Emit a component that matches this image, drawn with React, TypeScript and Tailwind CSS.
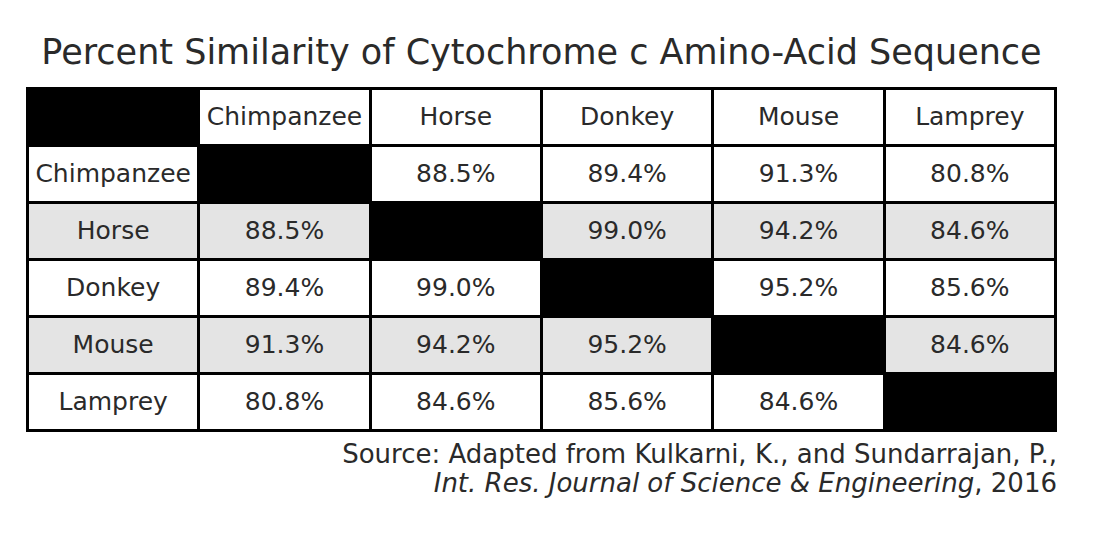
import React from "react";

const names = ["Chimpanzee", "Horse", "Donkey", "Mouse", "Lamprey"];
const data: (string | null)[][] = [
  [null, "88.5%", "89.4%", "91.3%", "80.8%"],
  ["88.5%", null, "99.0%", "94.2%", "84.6%"],
  ["89.4%", "99.0%", null, "95.2%", "85.6%"],
  ["91.3%", "94.2%", "95.2%", null, "84.6%"],
  ["80.8%", "84.6%", "85.6%", "84.6%", null],
];

function Cell({ children, bg }: { children?: React.ReactNode; bg: string }) {
  return (
    <div className={`h-[54px] flex items-center justify-center whitespace-nowrap ${bg}`}>
      {children}
    </div>
  );
}

export default function App() {
  return (
    <div className="w-[1120px] h-[542px] bg-white text-[#2a2a2a] font-['DejaVu_Sans',sans-serif] overflow-hidden">
      <div className="pl-[26px] pt-[32px]">
        <h1 className="w-[1031px] text-center text-[35px] leading-[40px] whitespace-nowrap">
          Percent Similarity of Cytochrome c Amino-Acid Sequence
        </h1>
        <div className="mt-[15px] w-[1031px] grid grid-cols-6 gap-[3px] p-[3px] bg-black text-[25px]">
          <Cell bg="bg-black" />
          {names.map((n) => (
            <Cell key={n} bg="bg-white">
              {n}
            </Cell>
          ))}
          {data.map((row, i) => (
            <React.Fragment key={i}>
              <Cell bg={i % 2 === 1 ? "bg-[#e4e4e4]" : "bg-white"}>{names[i]}</Cell>
              {row.map((v, j) =>
                v === null ? (
                  <Cell key={j} bg="bg-black" />
                ) : (
                  <Cell key={j} bg={i % 2 === 1 ? "bg-[#e4e4e4]" : "bg-white"}>
                    {v}
                  </Cell>
                )
              )}
            </React.Fragment>
          ))}
        </div>
        <div className="w-[1031px] text-right text-[26px] leading-[29px] pt-[8px] whitespace-nowrap">
          <div>Source: Adapted from Kulkarni, K., and Sundarrajan, P.,</div>
          <div>
            <span className="italic">Int. Res. Journal of Science &amp; Engineering</span>, 2016
          </div>
        </div>
      </div>
    </div>
  );
}
